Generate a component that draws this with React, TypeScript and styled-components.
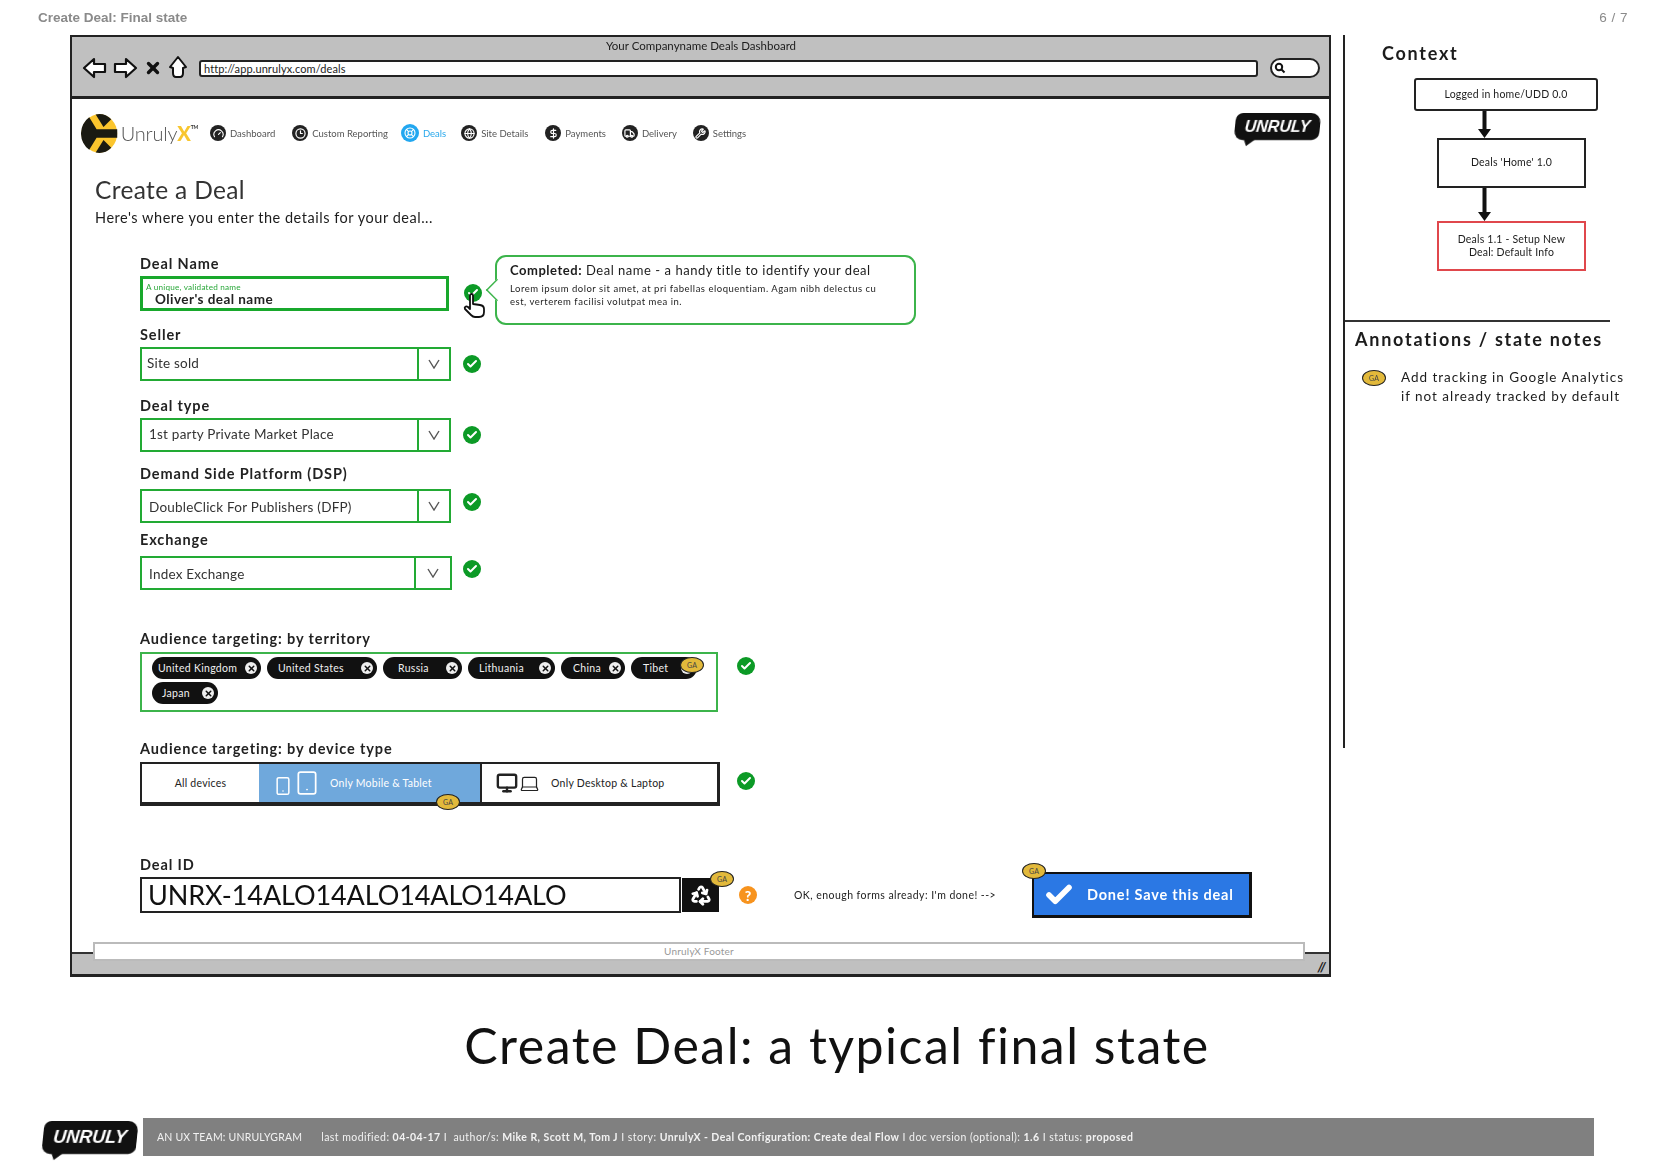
import React from 'react';
import styled, { createGlobalStyle } from 'styled-components';
import { Gauge, Clock3, LifeBuoy, Globe, DollarSign, Truck, Wrench, Recycle, Check, X, Smartphone, Tablet, Monitor, Laptop } from 'lucide-react';

const Global = createGlobalStyle`
  html, body { margin: 0; padding: 0; background: #fff; }
  body { font-family: "Lato", "Liberation Sans", sans-serif; color: #1c1c1c; }
  * { box-sizing: border-box; }
`;

const Page = styled.div`
  width: 1674px;
  height: 1162px;
  overflow: hidden;
  padding: 10px 0 0 0;
  filter: blur(0.5px);
`;
const TopBar = styled.div`
  display: flex;
  justify-content: space-between;
  padding: 0 46px 0 38px;
  height: 25px;
  font-family: "Liberation Sans", sans-serif;
  font-size: 13.5px;
  font-weight: 700;
  color: #8a8a8a;
  line-height: 16px;
`;
const PageNo = styled.span`
  font-weight: 400;
  letter-spacing: 0.5px;
`;
const Main = styled.div`
  display: flex;
  align-items: flex-start;
  padding-left: 70px;
`;
const Win = styled.div`
  width: 1261px;
  height: 942px;
  border: 2px solid #222;
  display: flex;
  flex-direction: column;
  background: #fff;
`;
const Chrome = styled.div`
  height: 62px;
  background: #c0c0c0;
  border-bottom: 3px solid #222;
  padding: 2px 9px 0 10px;
  flex: none;
`;
const ChromeTitle = styled.div`
  text-align: center;
  font-size: 11.5px;
  line-height: 14px;
  height: 14px;
`;
const ChromeRow = styled.div`
  display: flex;
  align-items: center;
  gap: 6px;
  height: 30px;
`;
const ChromeIcons = styled.div`
  display: flex;
  align-items: center;
  gap: 6px;
  margin-right: 5px;
`;
const Url = styled.div`
  flex: 1;
  height: 17px;
  background: #fff;
  border: 2px solid #222;
  border-radius: 3px;
  font-size: 11px;
  line-height: 13px;
  padding-left: 3px;
  margin-right: 6px;
  letter-spacing: 0.1px;
`;
const Search = styled.div`
  width: 50px;
  height: 20px;
  background: #fff;
  border: 2px solid #222;
  border-radius: 10px;
  display: flex;
  align-items: center;
  padding-left: 2px;
`;
const Body = styled.div`
  flex: 1;
  position: relative;
  padding: 12px 8px 0 9px;
`;
const Nav = styled.div`
  display: flex;
  align-items: center;
  height: 44px;
`;
const LogoMark = styled.div`
  display: flex;
  align-items: center;
  width: 117px;
`;
const LogoWord = styled.span`
  font-size: 20px;
  font-weight: 300;
  color: #555;
  margin-left: 3px;
  letter-spacing: -0.2px;
  line-height: 1;
`;
const LogoX = styled.b`
  color: #f8c62f;
  font-weight: 900;
`;
const LogoTm = styled.sup`
  font-size: 5px;
  color: #333;
  font-weight: 700;
  vertical-align: 12px;
`;
const NavItem = styled.div<{ $gap: number; $active?: boolean }>`
  display: flex;
  align-items: center;
  gap: 4px;
  margin-left: ${p => p.$gap}px;
  font-size: 9.5px;
  color: ${p => (p.$active ? '#28a8ec' : '#555')};
`;
const NavDot = styled.span<{ $active?: boolean }>`
  width: ${p => (p.$active ? 18 : 16)}px;
  height: ${p => (p.$active ? 18 : 16)}px;
  border-radius: 50%;
  background: ${p => (p.$active ? '#22a7f0' : '#222')};
  color: #fff;
  display: flex;
  align-items: center;
  justify-content: center;
`;
const Bubble = styled.div<{ $w: number; $h: number; $fs: number }>`
  position: relative;
  width: ${p => p.$w}px;
  height: ${p => p.$h}px;
  background: #111;
  border-radius: 7px 10px 7px 9px;
  transform: skewX(-6deg);
  color: #fff;
  font-family: "Liberation Sans", sans-serif;
  font-style: italic;
  font-weight: 900;
  font-size: ${p => p.$fs}px;
  display: flex;
  align-items: center;
  justify-content: center;
  flex: none;
  &::after {
    content: '';
    position: absolute;
    left: 10px;
    bottom: -6px;
    border-left: 3px solid transparent;
    border-right: 9px solid transparent;
    border-top: 7px solid #111;
  }
`;
const BrandSlot = styled.div`
  margin-left: auto;
  margin-top: -14px;
  margin-right: 1px;
`;
const Heading = styled.h1`
  margin: 20px 0 0 14px;
  font-size: 24.5px;
  font-weight: 400;
  line-height: 30px;
  letter-spacing: 0.35px;
  color: #333;
`;
const Sub = styled.p`
  margin: 3px 0 0 14px;
  font-size: 14.5px;
  line-height: 20px;
  letter-spacing: 0.53px;
`;
const Form = styled.div`
  padding: 27px 0 0 59px;
  display: flex;
  flex-direction: column;
`;
const Field = styled.div<{ $top?: number }>`
  margin-top: ${p => p.$top ?? 0}px;
  position: relative;
`;
const Label = styled.div<{ $mb?: number }>`
  font-size: 14.5px;
  font-weight: 700;
  letter-spacing: 0.88px;
  line-height: 18px;
  margin-bottom: ${p => p.$mb ?? 3}px;
  color: #222;
`;
const Row = styled.div`
  display: flex;
  align-items: flex-start;
`;
const NameBox = styled.div`
  width: 309px;
  height: 35px;
  border: 3px solid #18a82c;
  padding: 4px 0 0 3px;
`;
const Hint = styled.div`
  font-size: 8.2px;
  line-height: 8px;
  color: #2aa83a;
  letter-spacing: 0.2px;
`;
const NameValue = styled.div`
  font-size: 13.5px;
  font-weight: 700;
  line-height: 16px;
  margin-left: 9px;
  letter-spacing: 0.45px;
  color: #222;
`;
const Select = styled.div<{ $w?: number }>`
  width: ${p => p.$w ?? 311}px;
  height: 34px;
  border: 2px solid #22aa34;
  display: flex;
`;
const SelectText = styled.div<{ $pad?: number; $dy?: number }>`
  flex: 1;
  font-size: 13.5px;
  line-height: 28px;
  padding-left: ${p => p.$pad ?? 5}px;
  padding-top: ${p => p.$dy ?? 0}px;
  letter-spacing: 0.22px;
  color: #333;
`;
const SelectBtn = styled.div<{ $w?: number }>`
  width: ${p => p.$w ?? 32}px;
  border-left: 2px solid #22aa34;
  display: flex;
  align-items: center;
  justify-content: center;
`;
const Ok = styled.span<{ $l?: number; $t?: number }>`
  display: flex;
  width: 18px;
  height: 18px;
  border-radius: 50%;
  background: #0c9a26;
  color: #fff;
  align-items: center;
  justify-content: center;
  margin-left: ${p => p.$l ?? 12}px;
  margin-top: ${p => p.$t ?? 8}px;
  flex: none;
`;
const Cursor = styled.span`
  position: absolute;
  left: 323px;
  top: 38px;
  line-height: 0;
`;
const Balloon = styled.div`
  position: absolute;
  left: 355px;
  top: 0;
  width: 421px;
  height: 70px;
  border: 2px solid #3cb44b;
  border-radius: 11px;
  background: #fff;
  padding: 4px 12px 0 13px;
  &::before {
    content: '';
    position: absolute;
    left: -11px;
    top: 22px;
    width: 20px;
    height: 20px;
    background: #fff;
    border-left: 2px solid #3cb44b;
    border-bottom: 2px solid #3cb44b;
    transform: rotate(45deg) scale(0.72);
  }
`;
const BalloonTitle = styled.div`
  font-size: 13px;
  line-height: 18px;
  letter-spacing: 0.53px;
  position: relative;
`;
const BalloonText = styled.div`
  font-size: 9.5px;
  line-height: 12.5px;
  letter-spacing: 0.52px;
  margin-top: 4px;
  max-width: 375px;
  position: relative;
`;
const Tags = styled.div`
  position: relative;
  width: 578px;
  height: 60px;
  border: 2px solid #3cb44b;
  padding: 3px 8px 0 10px;
  display: flex;
  flex-wrap: wrap;
  gap: 3px 6px;
  align-content: flex-start;
`;
const Tag = styled.span<{ $w: number; $pad?: number }>`
  width: ${p => p.$w}px;
  height: 22px;
  border-radius: 11px;
  background: #111;
  color: #f0f0f0;
  font-size: 10.5px;
  display: flex;
  align-items: center;
  justify-content: space-between;
  padding: 0 4px 0 ${p => p.$pad ?? 6}px;
  letter-spacing: 0.3px;
`;
const TagX = styled.span`
  width: 12px;
  height: 12px;
  border-radius: 50%;
  background: #eee;
  color: #111;
  display: flex;
  align-items: center;
  justify-content: center;
`;
const Ga = styled.span<{ $l: number; $t: number }>`
  position: absolute;
  left: ${p => p.$l}px;
  top: ${p => p.$t}px;
  width: 24px;
  height: 16px;
  border-radius: 50%;
  background: #e2b93b;
  border: 1.5px solid #222;
  font-size: 7px;
  color: #444;
  display: flex;
  align-items: center;
  justify-content: center;
  letter-spacing: 0.1px;
`;
const Segments = styled.div`
  position: relative;
  display: flex;
  width: 580px;
  height: 44px;
  border: 2px solid #222;
  border-bottom-width: 4px;
  border-right-width: 3px;
`;
const Seg = styled.div<{ $w: number; $on?: boolean; $center?: boolean }>`
  width: ${p => p.$w}px;
  display: flex;
  align-items: center;
  padding-left: ${p => (p.$center ? 0 : 14)}px;
  justify-content: ${p => (p.$center ? 'center' : 'flex-start')};
  background: ${p => (p.$on ? '#6fa8dc' : '#fff')};
  color: ${p => (p.$on ? '#fff' : '#222')};
  border-right: ${p => (p.$on ? '2px solid #222' : '0')};
  font-size: 10.5px;
  letter-spacing: 0.25px;
`;
const SegIcons = styled.span<{ $mr: number }>`
  display: flex;
  align-items: flex-end;
  gap: 1px;
  margin-right: ${p => p.$mr}px;
`;
const IdRow = styled.div`
  display: flex;
  align-items: center;
  position: relative;
`;
const IdBox = styled.div`
  width: 541px;
  height: 36px;
  border: 2px solid #222;
  font-size: 27px;
  line-height: 32px;
  padding-left: 6px;
  letter-spacing: -0.1px;
  color: #111;
`;
const Recycler = styled.div`
  width: 37px;
  height: 34px;
  background: #111;
  color: #fff;
  margin-left: 1px;
  display: flex;
  align-items: center;
  justify-content: center;
`;
const Help = styled.span`
  width: 18px;
  height: 18px;
  border-radius: 50%;
  background: #f7931e;
  color: #fff;
  font-size: 14px;
  font-weight: 900;
  display: flex;
  align-items: center;
  justify-content: center;
  margin-left: 20px;
`;
const DoneHint = styled.span`
  font-size: 10.5px;
  margin-left: 37px;
  width: 238px;
  letter-spacing: 0.45px;
`;
const DoneBtn = styled.div`
  width: 220px;
  height: 46px;
  background: #2b78e4;
  border: 2px solid #111;
  border-bottom-width: 3px;
  border-right-width: 3px;
  color: #fff;
  font-size: 14.5px;
  font-weight: 700;
  letter-spacing: 0.8px;
  display: flex;
  align-items: center;
  padding-left: 10px;
  gap: 13px;
`;
const WinFooter = styled.div`
  position: relative;
  height: 33px;
  flex: none;
  margin-top: auto;
  background: linear-gradient(#fff 0 10px, #333 10px 12px, #c0c0c0 12px);
  border-bottom: 1px solid #222;
  padding: 0 24px 0 21px;
`;
const WinFootBar = styled.div`
  height: 19px;
  background: #fff;
  border: 2px solid #bbb;
  text-align: center;
  font-size: 10px;
  line-height: 15px;
  color: #999;
  letter-spacing: 0.2px;
`;
const Grip = styled.span`
  position: absolute;
  right: 3px;
  bottom: 1px;
  font-size: 13px;
  font-weight: 900;
  font-style: italic;
  color: #222;
  line-height: 12px;
`;
const Side = styled.div`
  margin-left: 12px;
  width: 270px;
  height: 713px;
  border-left: 2px solid #222;
  padding-top: 6px;
`;
const SideTitle = styled.div<{ $l: number; $t?: number }>`
  font-size: 18px;
  font-weight: 700;
  letter-spacing: 1.75px;
  margin-left: ${p => p.$l}px;
  margin-top: ${p => p.$t ?? 0}px;
  line-height: 24px;
`;
const Flow = styled.div`
  display: flex;
  flex-direction: column;
  align-items: flex-start;
  margin: 13px 0 0 69px;
  height: 242px;
`;
const FlowBox = styled.div<{ $w: number; $h: number; $l: number; $c?: string; $r?: number }>`
  width: ${p => p.$w}px;
  height: ${p => p.$h}px;
  margin-left: ${p => p.$l}px;
  border: 2px solid ${p => p.$c ?? '#222'};
  border-radius: ${p => p.$r ?? 0}px;
  display: flex;
  align-items: center;
  justify-content: center;
  text-align: center;
  font-size: 10.5px;
  line-height: 13.5px;
  letter-spacing: 0.2px;
`;
const FlowArrow = styled.svg`
  display: block;
  margin-left: 62px;
`;
const SideRule = styled.div`
  width: 265px;
  border-top: 2px solid #333;
`;
const NoteRow = styled.div`
  display: flex;
  margin: 17px 0 0 17px;
  font-size: 13.5px;
  line-height: 18.5px;
  letter-spacing: 0.97px;
  gap: 15px;
  white-space: nowrap;
`;
const NoteGa = styled.span`
  flex: none;
  width: 24px;
  height: 16px;
  margin-top: 2px;
  border-radius: 50%;
  background: #e2b93b;
  border: 1.5px solid #222;
  font-size: 7px;
  color: #444;
  display: flex;
  align-items: center;
  justify-content: center;
  letter-spacing: 0;
`;
const BigTitle = styled.div`
  text-align: center;
  font-size: 50px;
  font-weight: 400;
  line-height: 60px;
  margin-top: 38px;
  color: #111;
  letter-spacing: 1.5px;
`;
const Bottom = styled.div`
  display: flex;
  align-items: center;
  margin: 43px 0 0 43px;
`;
const BottomBar = styled.div`
  margin-left: 6px;
  width: 1451px;
  height: 38px;
  background: #808080;
  color: #f2f2f2;
  font-size: 10.5px;
  display: flex;
  align-items: center;
  padding-left: 14px;
  letter-spacing: 0.45px;
  white-space: pre;
`;
const Strong = styled.b`
  font-weight: 700;
`;
const TeamName = styled.span`
  margin-right: 19px;
  letter-spacing: 0.2px;
`;

const Tick = ({ size = 12 }: { size?: number }) => <Check size={size} strokeWidth={4} />;
const Caret = () => (
  <svg width="12" height="10" viewBox="0 0 12 10" fill="none" stroke="#555" strokeWidth="1.4"><path d="M1 1l5 8 5-8" /></svg>
);
const Arrow = ({ flip }: { flip?: boolean }) => (
  <svg width="25" height="22" viewBox="0 0 25 22" fill="#fff" stroke="#111" strokeWidth="2.2" strokeLinejoin="round" style={flip ? { transform: 'scaleX(-1)' } : undefined}>
    <path d="M2 7h11V2l10 9-10 9v-5H2z" />
  </svg>
);

const tags: [string, number, number][] = [
  ['United Kingdom', 109, 6], ['United States', 110, 11], ['Russia', 79, 15], ['Lithuania', 87, 11], ['China', 64, 12], ['Tibet', 66, 12],
];

export default function App() {
  return (
    <Page>
      <Global />
      <TopBar>
        <span>Create Deal: Final state</span>
        <PageNo>6 / 7</PageNo>
      </TopBar>
      <Main>
        <Win>
          <Chrome>
            <ChromeTitle>Your Companyname Deals Dashboard</ChromeTitle>
            <ChromeRow>
              <ChromeIcons>
                <Arrow flip />
                <Arrow />
                <X size={18} strokeWidth={4.5} color="#111" />
                <svg width="20" height="26" viewBox="0 0 20 26" fill="#fff" stroke="#111" strokeWidth="2" strokeLinejoin="round"><path d="M10 2L2 12l3 1v5c0 2 1 4 3 4h4c2 0 3-2 3-4v-5l3-1z" /></svg>
              </ChromeIcons>
              <Url>http://app.unrulyx.com/deals</Url>
              <Search>
                <svg width="12" height="12" viewBox="0 0 12 12" fill="none" stroke="#111" strokeWidth="2"><circle cx="5" cy="5" r="3.2" /><path d="M7.500 7.500l3 3" /></svg>
              </Search>
            </ChromeRow>
          </Chrome>
          <Body>
            <Nav>
              <LogoMark>
                <svg width="40" height="43" viewBox="0 0 40 43">
                  <ellipse cx="20" cy="21.5" rx="19.5" ry="21" fill="#fbc52d" />
                  <path d="M9 3.800A19.500 21 0 0 0 9 39.200L17 26H39.500V17H17Z" fill="#1a1a12" />
                  <path d="M16 .8A19.500 21 0 0 1 33 6L24.500 14.500Z" fill="#1a1a12" />
                  <path d="M16 42.200A19.500 21 0 0 0 33 37L24.500 28.500Z" fill="#1a1a12" />
                </svg>
                <LogoWord>Unruly<LogoX>X</LogoX><LogoTm>TM</LogoTm></LogoWord>
              </LogoMark>
              <NavItem $gap={12}><NavDot><Gauge size={11} strokeWidth={2.4} /></NavDot>Dashboard</NavItem>
              <NavItem $gap={17}><NavDot><Clock3 size={11} strokeWidth={2.6} /></NavDot>Custom Reporting</NavItem>
              <NavItem $gap={13} $active><NavDot $active><LifeBuoy size={12} strokeWidth={2.2} /></NavDot>Deals</NavItem>
              <NavItem $gap={15}><NavDot><Globe size={11} strokeWidth={2.4} /></NavDot>Site Details</NavItem>
              <NavItem $gap={17}><NavDot><DollarSign size={11} strokeWidth={2.6} /></NavDot>Payments</NavItem>
              <NavItem $gap={16}><NavDot><Truck size={11} strokeWidth={2.6} /></NavDot>Delivery</NavItem>
              <NavItem $gap={16}><NavDot><Wrench size={11} strokeWidth={2.6} /></NavDot>Settings</NavItem>
              <BrandSlot><Bubble $w={85} $h={27} $fs={16}>UNRULY</Bubble></BrandSlot>
            </Nav>
            <Heading>Create a Deal</Heading>
            <Sub>Here's where you enter the details for your deal...</Sub>
            <Form>
              <Field>
                <Label>Deal Name</Label>
                <Row>
                  <NameBox>
                    <Hint>A unique, validated name</Hint>
                    <NameValue>Oliver's deal name</NameValue>
                  </NameBox>
                  <Ok $l={15} $t={8}><Tick /></Ok>
                </Row>
                <Balloon>
                  <BalloonTitle><b>Completed:</b> Deal name - a handy title to identify your deal</BalloonTitle>
                  <BalloonText>Lorem ipsum dolor sit amet, at pri fabellas eloquentiam. Agam nibh delectus cu est, verterem facilisi volutpat mea in.</BalloonText>
                </Balloon>
                <Cursor>
                  <svg width="24" height="26" viewBox="0 0 24 26" fill="#fff" stroke="#111" strokeWidth="1.8" strokeLinejoin="round"><path d="M7 2.500c0-2 3-2 3 0V11l7 1c3 .5 4 2 4 4v3c0 3-2 5-5 5h-4c-2 0-3-1-4-2l-6-6c-1-2 1-3.500 3-2l2 2z" /></svg>
                </Cursor>
              </Field>
              <Field $top={15}>
                <Label>Seller</Label>
                <Row>
                  <Select><SelectText>Site sold</SelectText><SelectBtn><Caret /></SelectBtn></Select>
                  <Ok><Tick /></Ok>
                </Row>
              </Field>
              <Field $top={16}>
                <Label>Deal type</Label>
                <Row>
                  <Select><SelectText $pad={7}>1st party Private Market Place</SelectText><SelectBtn><Caret /></SelectBtn></Select>
                  <Ok><Tick /></Ok>
                </Row>
              </Field>
              <Field $top={13}>
                <Label $mb={6}>Demand Side Platform (DSP)</Label>
                <Row>
                  <Select><SelectText $pad={7} $dy={2}>DoubleClick For Publishers (DFP)</SelectText><SelectBtn><Caret /></SelectBtn></Select>
                  <Ok $t={4}><Tick /></Ok>
                </Row>
              </Field>
              <Field $top={8}>
                <Label $mb={7}>Exchange</Label>
                <Row>
                  <Select $w={312}><SelectText $pad={7} $dy={2}>Index Exchange</SelectText><SelectBtn $w={36}><Caret /></SelectBtn></Select>
                  <Ok $l={11} $t={4}><Tick /></Ok>
                </Row>
              </Field>
              <Field $top={40}>
                <Label $mb={4}>Audience targeting: by territory</Label>
                <Row>
                  <Tags>
                    {tags.map(([n, w, p]) => (
                      <Tag key={n} $w={w} $pad={p}>{n}<TagX><X size={9} strokeWidth={4} /></TagX></Tag>
                    ))}
                    <Tag $w={66} $pad={10}>Japan<TagX><X size={9} strokeWidth={4} /></TagX></Tag>
                    <Ga $l={538} $t={3}>GA</Ga>
                  </Tags>
                  <Ok $l={19} $t={5}><Tick /></Ok>
                </Row>
              </Field>
              <Field $top={28}>
                <Label $mb={4}>Audience targeting: by device type</Label>
                <Row>
                  <Segments>
                    <Seg $w={117} $center>All devices</Seg>
                    <Seg $w={223} $on>
                      <SegIcons $mr={10}><Smartphone size={20} strokeWidth={1.8} /><Tablet size={26} strokeWidth={1.6} /></SegIcons>
                      Only Mobile &amp; Tablet
                      <Ga $l={294} $t={30}>GA</Ga>
                    </Seg>
                    <Seg $w={235}>
                      <SegIcons $mr={11}><Monitor size={22} strokeWidth={2.6} /><Laptop size={21} strokeWidth={1.4} /></SegIcons>
                      Only Desktop &amp; Laptop
                    </Seg>
                  </Segments>
                  <Ok $l={17} $t={10}><Tick /></Ok>
                </Row>
              </Field>
              <Field $top={50}>
                <Label $mb={-2}>Deal ID</Label>
                <IdRow>
                  <IdBox>UNRX-14ALO14ALO14ALO14ALO</IdBox>
                  <Recycler><Recycle size={22} strokeWidth={3} /></Recycler>
                  <Help>?</Help>
                  <DoneHint>OK, enough forms already: I'm done! --&gt;</DoneHint>
                  <DoneBtn><Check size={30} strokeWidth={4.5} />Done! Save this deal</DoneBtn>
                  <Ga $l={570} $t={-1}>GA</Ga>
                  <Ga $l={882} $t={-9}>GA</Ga>
                </IdRow>
              </Field>
            </Form>
          </Body>
          <WinFooter>
            <WinFootBar>UnrulyX Footer</WinFootBar>
            <Grip>//</Grip>
          </WinFooter>
        </Win>
        <Side>
          <SideTitle $l={37}>Context</SideTitle>
          <Flow>
            <FlowBox $w={184} $h={33} $l={0} $r={3}>Logged in home/UDD 0.0</FlowBox>
            <FlowArrow width="16" height="27" viewBox="0 0 16 27"><path d="M6.500 0h4v18H15l-6.500 9L2 18h4.500z" fill="#111" /></FlowArrow>
            <FlowBox $w={149} $h={50} $l={23}>Deals 'Home' 1.0</FlowBox>
            <FlowArrow width="16" height="33" viewBox="0 0 16 33"><path d="M6.500 0h4v24H15l-6.500 9L2 24h4.500z" fill="#111" /></FlowArrow>
            <FlowBox $w={149} $h={50} $l={23} $c="#e0474c">Deals 1.1 - Setup New<br />Deal: Default Info</FlowBox>
          </Flow>
          <SideRule />
          <SideTitle $l={10} $t={5}>Annotations / state notes</SideTitle>
          <NoteRow>
            <NoteGa>GA</NoteGa>
            <span>Add tracking in Google Analytics<br />if not already tracked by default</span>
          </NoteRow>
        </Side>
      </Main>
      <BigTitle>Create Deal: a typical final state</BigTitle>
      <Bottom>
        <Bubble $w={94} $h={33} $fs={18}>UNRULY</Bubble>
        <BottomBar>
          <TeamName>AN UX TEAM: UNRULYGRAM</TeamName>
          last modified: <Strong>04-04-17</Strong> I  author/s: <Strong>Mike R, Scott M, Tom J</Strong> I story: <Strong>UnrulyX - Deal Configuration: Create deal Flow</Strong> I doc version (optional): <Strong>1.6</Strong> I status: <Strong>proposed</Strong>
        </BottomBar>
      </Bottom>
    </Page>
  );
}
